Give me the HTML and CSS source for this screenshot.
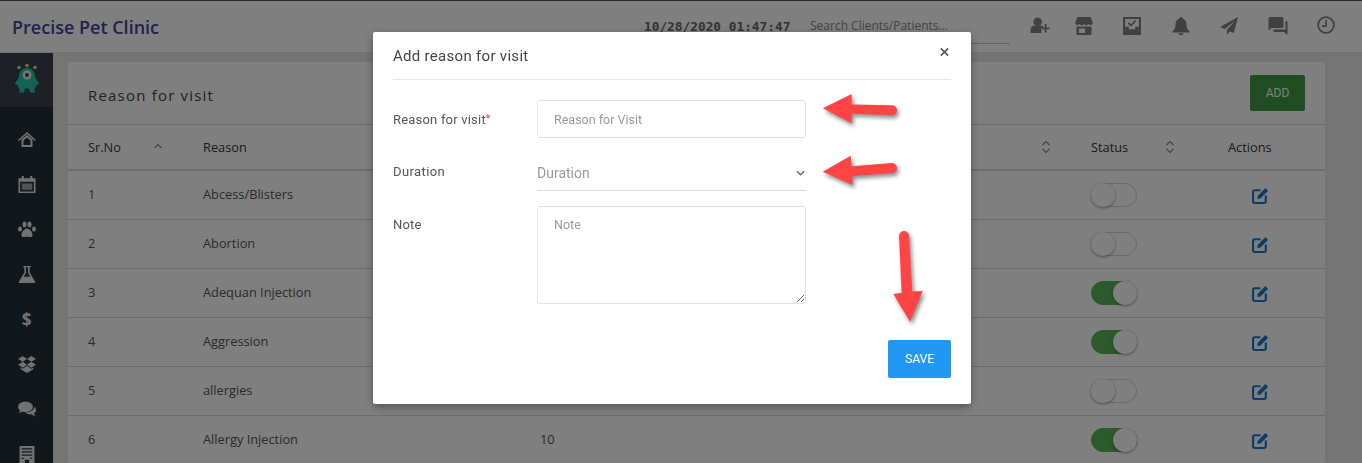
FILE: index.html
```html
<!DOCTYPE html>
<html>
  <head>
    <meta charset="utf-8" />
    <title>Reason for visit</title>
    <link rel="stylesheet" href="styles.css">
  </head>
  <body>
    <svg class="defs" width="0" height="0">
      <symbol id="i-edit" viewBox="0 0 16 16">
        <path d="M8 3H2.600C1.700 3 1 3.700 1 4.600v8.800c0 .9.700 1.600 1.600 1.600h8.800c.9 0 1.600-.7 1.600-1.600V8" fill="none" stroke="currentColor" stroke-width="2"/>
        <path d="M5.500 8.200 12.600 1l2.600 2.600-7.200 7.200-3 .4z" fill="currentColor"/>
      </symbol>
      <symbol id="i-sort" viewBox="0 0 10 14">
        <path d="M1.500 5 5 1.500 8.500 5M1.500 9 5 12.500 8.500 9" fill="none" stroke="currentColor" stroke-width="1.200"/>
      </symbol>
    </svg>

    <div class="topbar">
      <div class="brand">Precise Pet Clinic</div>
      <div class="clock">10/28/2020 01:47:47</div>
      <div class="search">Search Clients/Patients...</div>
      <div class="top_icons">
        <svg class="ic_user" viewBox="0 0 20 18"><circle cx="7.500" cy="5" r="4.500"/><path d="M0 17v-3c0-3 2-5 4-5h7c1 0 2 .5 2.500 1.500V12h-2v5z"/><path d="M15 7.500h2V11h3v2h-3v3.500h-2V13h-3v-2h3z"/></svg>
        <svg class="ic_store" viewBox="0 0 18 18"><path d="M2.500 0h13L18 6a2.500 2.500 0 0 1-4.500 1 2.600 2.600 0 0 1-4.500 0 2.600 2.600 0 0 1-4.500 0A2.500 2.500 0 0 1 0 6z"/><path d="M1.500 9.500h15V18h-15zM4 11.500V16h6v-4.500z" fill-rule="evenodd"/></svg>
        <svg viewBox="0 0 17 17"><path d="M0 0h17v17H0zM2 2v13h13V2z" fill-rule="evenodd"/><path d="M2 9h3.500v2.500h6V9H15v6H2z"/><path d="m5 5.500 2.500 2.500 4.500-4.500" fill="none" stroke="#808080" stroke-width="1.600"/></svg>
        <svg viewBox="0 0 17 18"><path d="M8.500 0c1 0 1.500.7 1.500 1.500C13 2.300 14 5 14 8c0 3 1 4.500 3 6.500v1H0v-1C2 12.500 3 11 3 8c0-3 1-5.700 4-6.500C7 .7 7.500 0 8.500 0z"/><path d="M6 16.300h5a2.500 2 0 0 1-5 0z"/></svg>
        <svg viewBox="0 0 17 17"><path d="M17 0 0 9.500l4.500 1.800L14 3.500 6.500 12.500V17l2.800-3.500 3.700 1.500z"/></svg>
        <svg viewBox="0 0 19 18"><path d="M0 1.500C0 .7.700 0 1.500 0h12c.8 0 1.500.7 1.500 1.500v8c0 .8-.7 1.500-1.500 1.500H3L0 13.500z"/><path d="M17 4h1c.6 0 1 .4 1 1v13l-3.500-3H5v-2.500h12z"/></svg>
        <svg class="ic_clock" viewBox="0 0 16 16"><circle cx="8" cy="8" r="7" fill="none" stroke="#808080" stroke-width="1.600"/><path d="M8 3.500V9H4.500" fill="none" stroke="#808080" stroke-width="1.400"/></svg>
      </div>
    </div>

    <div class="main">
      <div class="sidebar">
        <div class="logo">
          <svg viewBox="0 0 30 34" width="30" height="34">
            <circle cx="7" cy="4.500" r="1.800" fill="#e8d880"/>
            <circle cx="15" cy="2.500" r="1.800" fill="#e8d880"/>
            <circle cx="23" cy="4.500" r="1.800" fill="#e8d880"/>
            <path d="M15 5c6 0 8 5 8.500 10l4 6-3 1-1 3-1.500 1 1 3.500h-5l-1-4h-4l-1 4h-5l1-3.500-1.500-1-1-3-3-1 4-6C7 10 9 5 15 5z" fill="#1fc8a6"/>
            <circle cx="15" cy="12" r="4.500" fill="#e8e8e8"/>
            <circle cx="15" cy="12" r="2" fill="#444"/>
          </svg>
        </div>
        <svg class="nav_icon" viewBox="0 0 18 15"><path d="M9 0 18 8l-1 1-8-7-8 7-1-1z"/><path d="M3.500 7.500 9 3l5.500 4.500V15h-11zM5.500 8.500V13h7V8.500L9 5.500z" fill-rule="evenodd"/></svg>
        <svg class="nav_icon" viewBox="0 0 16 16"><path d="M0 2h3V0h2v2h6V0h2v2h3v14H0zM1.500 5.500v9h13v-9z" fill-rule="evenodd"/><path d="M3 7h10v6H3z" opacity=".65"/></svg>
        <svg class="nav_icon" viewBox="0 0 18 16"><ellipse cx="6.500" cy="3" rx="2" ry="3"/><ellipse cx="11.500" cy="3" rx="2" ry="3"/><ellipse cx="2" cy="7.500" rx="2" ry="2.600"/><ellipse cx="16" cy="7.500" rx="2" ry="2.600"/><path d="M9 7c3 0 5.500 4 5.500 6.500S12 16 9 15c-3 1-5.500 1-5.500-1.500S6 7 9 7z"/></svg>
        <svg class="nav_icon" viewBox="0 0 16 16"><path d="M4.500 0h7v1.200h-1V6l5 8.500c.5 1-.1 1.500-1 1.500H1.500c-.9 0-1.500-.5-1-1.500l5-8.500V1.200h-1zM7 1.200v5.200L5 10h6L9 6.400V1.200z" fill-rule="evenodd"/></svg>
        <div class="nav_dollar">$</div>
        <svg class="nav_icon" viewBox="0 0 17 16"><path d="M4.500 0 8.500 2.800 4.500 5.500 0 2.800zM12.500 0 17 2.800l-4.500 2.700-4-2.700zM4.500 5.500l4 2.700-4 2.800L0 8.200zM12.500 5.500 17 8.200 12.500 11l-4-2.800zM4.500 12l4-2.800 4 2.800 2-1.200V12.500L8.500 16l-6-3.500v-1.700z"/></svg>
        <svg class="nav_icon" viewBox="0 0 17 15"><ellipse cx="7" cy="5" rx="7" ry="5"/><path d="M2 8 1 11l4-2z"/><path d="M15.500 5c1 1 1.500 2 1.500 3 0 1.500-1 2.700-2 3.300l1.500 2.700-4-2c-2 .3-4-.3-5.500-1.500 4 0 8-2 8.500-5.500z"/></svg>
        <svg class="nav_icon" viewBox="0 0 14 16"><path d="M0 0h14v16H9v-3H5v3H0zM2 2v1.200h10V2zM2 5v1.200h10V5zM2 8v1.200h10V8zM2 11v1.200h2V11zM10 11v1.200h2V11z" fill-rule="evenodd"/></svg>
      </div>

      <div class="content">
        <div class="card">
          <div class="card_head">
            <span class="card_title">Reason for visit</span>
            <div class="btn_add">ADD</div>
          </div>

          <div class="row head">
            <div class="cell sr">Sr.No
              <svg class="sort" viewBox="0 0 10 14"><path d="M1.500 5 5 1.500 8.500 5" fill="none" stroke="currentColor" stroke-width="1.200" transform="translate(0 3)"/></svg>
            </div>
            <div class="cell">Reason</div>
            <div class="cell dur"><span>Duration</span><svg class="sort"><use href="#i-sort"/></svg></div>
            <div class="cell stat">Status<svg class="sort"><use href="#i-sort"/></svg></div>
            <div class="cell">Actions</div>
          </div>

          <div class="row">
            <div class="cell">1</div><div class="cell">Abcess/Blisters</div><div class="cell">10</div>
            <div class="cell"><span class="toggle"></span></div>
            <div class="cell"><svg class="edit"><use href="#i-edit"/></svg></div>
          </div>
          <div class="row">
            <div class="cell">2</div><div class="cell">Abortion</div><div class="cell">10</div>
            <div class="cell"><span class="toggle"></span></div>
            <div class="cell"><svg class="edit"><use href="#i-edit"/></svg></div>
          </div>
          <div class="row">
            <div class="cell">3</div><div class="cell">Adequan Injection</div><div class="cell">10</div>
            <div class="cell"><span class="toggle on"></span></div>
            <div class="cell"><svg class="edit"><use href="#i-edit"/></svg></div>
          </div>
          <div class="row">
            <div class="cell">4</div><div class="cell">Aggression</div><div class="cell">10</div>
            <div class="cell"><span class="toggle on"></span></div>
            <div class="cell"><svg class="edit"><use href="#i-edit"/></svg></div>
          </div>
          <div class="row">
            <div class="cell">5</div><div class="cell">allergies</div><div class="cell">10</div>
            <div class="cell"><span class="toggle"></span></div>
            <div class="cell"><svg class="edit"><use href="#i-edit"/></svg></div>
          </div>
          <div class="row">
            <div class="cell">6</div><div class="cell">Allergy Injection</div><div class="cell">10</div>
            <div class="cell"><span class="toggle on"></span></div>
            <div class="cell"><svg class="edit"><use href="#i-edit"/></svg></div>
          </div>
        </div>
      </div>
    </div>

    <div class="overlay">
      <div class="modal">
        <div class="modal_head">
          <span>Add reason for visit</span>
          <span class="close">&times;</span>
        </div>
        <div class="form_row first">
          <label>Reason for visit<em>*</em></label>
          <input class="field" type="text" placeholder="Reason for Visit"/>
        </div>
        <div class="form_row select_row">
          <label>Duration</label>
          <div class="select">
            <span>Duration</span>
            <svg viewBox="0 0 10 6" width="9" height="6"><path d="M1 1l4 4 4-4" fill="none" stroke="#666" stroke-width="1.500"/></svg>
          </div>
        </div>
        <div class="form_row note_row">
          <label>Note</label>
          <textarea class="field" placeholder="Note"></textarea>
        </div>
        <div class="modal_foot">
          <div class="btn_save">SAVE</div>
        </div>
      </div>

      <!-- annotation arrows drawn on top of the screenshot -->
      <svg class="arrows" width="1362" height="463" viewBox="0 0 1362 463">
        <path d="M822.700 108.300 851.700 94V104.500L892 105.200a5 5 0 0 1 0 10L851.700 113.500V123.300z"/>
        <path d="M822.700 171.700 850.700 155.700 851.500 166.300 892 163a5 5 0 0 1 0 10L852.200 176 852.700 185z"/>
        <path d="M899 236a5 5 0 0 1 10 0L912.200 291.500 922.700 291 910 321.700 893.300 294 901.700 292.800z"/>
      </svg>
    </div>
  </body>
</html>
```

FILE: styles.css
```css
html, body {
  height: 100%;
  margin: 0;
}
body {
  background-color: #e9e9e9;
  color: #555;
  font-family: "Open Sans", sans-serif;
  font-size: 12.800px;
  overflow: hidden;
}
.defs {
  display: block;
  height: 0;
}
.topbar {
  align-items: center;
  background-color: white;
  border-bottom: 1px solid #e0e0e0;
  border-top: 1px solid #555;
  box-sizing: border-box;
  display: flex;
  height: 53px;
  padding-left: 12px;
}
.brand {
  color: #46429a;
  font-size: 18px;
  font-weight: 600;
  width: 632px;
}
.clock {
  color: #666;
  font-family: "DejaVu Sans Mono", monospace;
  font-size: 12.800px;
  font-weight: bold;
  width: 166px;
}
.search {
  align-self: flex-start;
  border-bottom: 1px solid #ccc;
  color: #888;
  font-size: 12px;
  height: 32px;
  line-height: 30px;
  margin-top: 10px;
  width: 200px;
}
.top_icons {
  align-items: center;
  display: flex;
  fill: #808080;
  gap: 28.500px;
  margin: -2px 0 0 20px;
}
.top_icons svg {
  height: 18px;
  width: 20px;
}
.top_icons .ic_user {
  height: 17px;
}
.top_icons .ic_store {
  margin-left: -5px;
}
.top_icons .ic_clock {
  margin-top: -2px;
}
.main {
  display: flex;
  height: 410px;
  overflow: hidden;
}
.sidebar {
  align-items: center;
  background-color: #242f39;
  display: flex;
  flex-direction: column;
  fill: #e4e4e4;
  flex: none;
  width: 53px;
}
.logo {
  align-items: center;
  align-self: stretch;
  background-color: #3a424c;
  display: flex;
  flex: none;
  height: 54px;
  justify-content: center;
  margin-bottom: 24px;
}
.nav_icon {
  flex: none;
  height: 17px;
  margin-bottom: 28px;
  width: 18px;
}
.nav_dollar {
  color: #e4e4e4;
  flex: none;
  font-size: 17px;
  font-weight: bold;
  height: 17px;
  line-height: 17px;
  margin-bottom: 28px;
}
.content {
  flex: 1;
  padding: 9px 37px 0 15px;
}
.card {
  background-color: white;
  border-radius: 3px;
  height: 401px;
}
.card_head {
  align-items: center;
  border-bottom: 1px solid #d8d8d8;
  box-sizing: border-box;
  display: flex;
  height: 63px;
  justify-content: space-between;
  padding: 0 20px;
}
.card_title {
  color: #444;
  font-size: 15px;
  letter-spacing: 1.200px;
  margin-top: 4px;
}
.btn_add {
  background-color: #3f9a42;
  border-radius: 2px;
  color: white;
  font-family: Roboto, sans-serif;
  font-size: 12px;
  height: 36px;
  line-height: 36px;
  text-align: center;
  width: 55px;
}
.row {
  align-items: center;
  border-bottom: 1px solid #d8d8d8;
  box-sizing: border-box;
  display: grid;
  grid-template-columns: 115px 337px 551px 137px 97px;
  height: 49px;
  padding: 0 0 2px 20px;
}
.row.head {
  border-bottom-width: 2px;
  color: #333;
  height: 46px;
  padding-bottom: 0;
}
.cell {
  align-items: center;
  display: flex;
}
.sr, .dur, .stat {
  justify-content: space-between;
}
.sr {
  padding-right: 40px;
}
.dur {
  padding-right: 40px;
}
.stat {
  padding-right: 53px;
}
.sort {
  color: #888;
  height: 14px;
  width: 10px;
}
.toggle {
  background-color: white;
  border: 1px solid #d4d4d4;
  border-radius: 12px;
  box-sizing: border-box;
  display: block;
  height: 24px;
  margin-top: 1px;
  position: relative;
  width: 46px;
}
.toggle::after {
  background-color: white;
  border-radius: 50%;
  box-shadow: 0 1px 3px rgba(0, 0, 0, 0.4);
  content: "";
  height: 24px;
  left: -1px;
  position: absolute;
  top: -1px;
  width: 24px;
}
.toggle.on {
  background-color: #58b458;
  border-color: #58b458;
}
.toggle.on::after {
  left: 21px;
}
.edit {
  color: #1a78d0;
  height: 17px;
  margin: 2px 0 0 24px;
  width: 17px;
}
.overlay {
  background-color: rgba(0, 0, 0, 0.5);
  box-sizing: border-box;
  display: flex;
  inset: 0;
  justify-content: center;
  padding: 32px 18px 0 0;
  position: fixed;
}
.modal {
  background-color: white;
  border-radius: 2px;
  box-shadow: 0 3px 10px rgba(0, 0, 0, 0.35);
  box-sizing: border-box;
  color: #555;
  font-family: Roboto, sans-serif;
  height: 372px;
  padding: 0 20px;
  width: 598px;
}
.modal_head {
  align-items: center;
  border-bottom: 1px solid #e8e8e8;
  box-sizing: border-box;
  color: #444;
  display: flex;
  font-size: 15px;
  height: 48px;
  justify-content: space-between;
  letter-spacing: 0.300px;
  margin-bottom: 20px;
}
.close {
  color: #555;
  font-size: 19px;
  margin: -9px 1px 0 0;
}
.form_row {
  align-items: center;
  display: flex;
  font-size: 13px;
}
.form_row label {
  flex: none;
  letter-spacing: 0.200px;
  width: 144px;
}
.form_row em {
  color: #e33;
  font-size: 10px;
  font-style: normal;
  vertical-align: 2px;
}
.field {
  background-color: white;
  border: 1px solid #e2e2e2;
  border-radius: 3px;
  box-sizing: border-box;
  color: #555;
  font-family: inherit;
  font-size: 12.500px;
  padding: 0 16px;
  width: 269px;
}
input.field {
  height: 38px;
}
.field::placeholder {
  color: #999;
  opacity: 1;
}
.select_row {
  margin-top: 17px;
}
.select_row label {
  letter-spacing: 0.400px;
  margin-top: -3px;
}
.select {
  align-items: center;
  border-bottom: 1px solid #ddd;
  box-sizing: border-box;
  color: #999;
  display: flex;
  font-size: 14px;
  height: 36px;
  justify-content: space-between;
  padding-right: 1px;
  width: 269px;
}
.note_row {
  align-items: flex-start;
  margin-top: 15px;
}
.note_row label {
  padding-top: 11px;
}
textarea.field {
  display: block;
  height: 98px;
  padding-top: 10px;
}
.modal_foot {
  display: flex;
  justify-content: flex-end;
  margin-top: 36px;
}
.btn_save {
  background-color: #2196f3;
  border-radius: 2px;
  color: white;
  font-size: 12px;
  height: 38px;
  line-height: 38px;
  text-align: center;
  width: 63px;
}
.arrows {
  filter: drop-shadow(2px 3px 2px rgba(0, 0, 0, 0.45));
  fill: #ff4444;
  left: 0;
  position: absolute;
  top: 0;
}
```
